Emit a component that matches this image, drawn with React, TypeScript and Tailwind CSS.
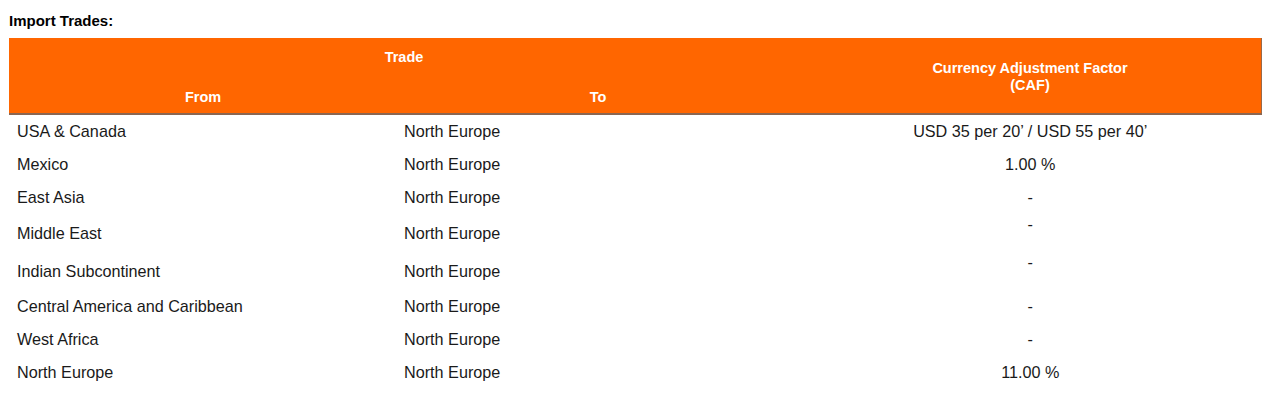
const ROWS: { from: string; to: string; caf: string; h: number; top?: boolean }[] = [
    { from: "USA & Canada", to: "North Europe", caf: "USD 35 per 20’ / USD 55 per 40’", h: 34 },
    { from: "Mexico", to: "North Europe", caf: "1.00 %", h: 33 },
    { from: "East Asia", to: "North Europe", caf: "-", h: 33 },
    { from: "Middle East", to: "North Europe", caf: "-", h: 38, top: true },
    { from: "Indian Subcontinent", to: "North Europe", caf: "-", h: 38, top: true },
    { from: "Central America and Caribbean", to: "North Europe", caf: "-", h: 33 },
    { from: "West Africa", to: "North Europe", caf: "-", h: 33 },
    { from: "North Europe", to: "North Europe", caf: "11.00 %", h: 33 },
];

const App = () => {
    return (
        <div className="w-[1280px] h-[412px] bg-white text-[#1a1a1a] font-['Liberation_Sans',Arial,sans-serif]">
            <div className="px-[9px] pt-[12px]">
                {/* Section title */}
                <h2 className="text-[15px] leading-[17px] font-bold text-black">Import Trades:</h2>

                <table className="mt-[9px] w-[1253px] border-collapse table-fixed">
                    <colgroup>
                        <col className="w-[388px]" />
                        <col className="w-[402px]" />
                        <col />
                    </colgroup>
                    <thead>
                        <tr className="bg-[#ff6600] text-white text-[14.5px] leading-[17px] font-bold">
                            <th colSpan={2} className="h-[38px] pt-[11px] align-top text-center">
                                Trade
                            </th>
                            <th
                                rowSpan={2}
                                className="align-middle text-center pt-[2px] border-r border-[#9a6a4a]"
                            >
                                Currency Adjustment Factor
                                <br />
                                (CAF)
                            </th>
                        </tr>
                        <tr className="bg-[#ff6600] text-white text-[14.5px] leading-[17px] font-bold border-b-2 border-[#8a6652]">
                            <th className="h-[38px] align-top pt-[13px] text-center">From</th>
                            <th className="h-[38px] align-top pt-[13px] text-center">To</th>
                        </tr>
                    </thead>
                    <tbody className="text-[16.2px] leading-[19px]">
                        {ROWS.map((row) => (
                            <tr key={row.from} style={{ height: row.h }}>
                                <td className="pl-[8px] align-middle">{row.from}</td>
                                <td className="pl-[7px] align-middle">{row.to}</td>
                                <td
                                    className={
                                        row.top
                                            ? "text-center align-top pt-[1px]"
                                            : "text-center align-middle"
                                    }
                                >
                                    {row.caf}
                                </td>
                            </tr>
                        ))}
                    </tbody>
                </table>
            </div>
        </div>
    );
};

export default App;
